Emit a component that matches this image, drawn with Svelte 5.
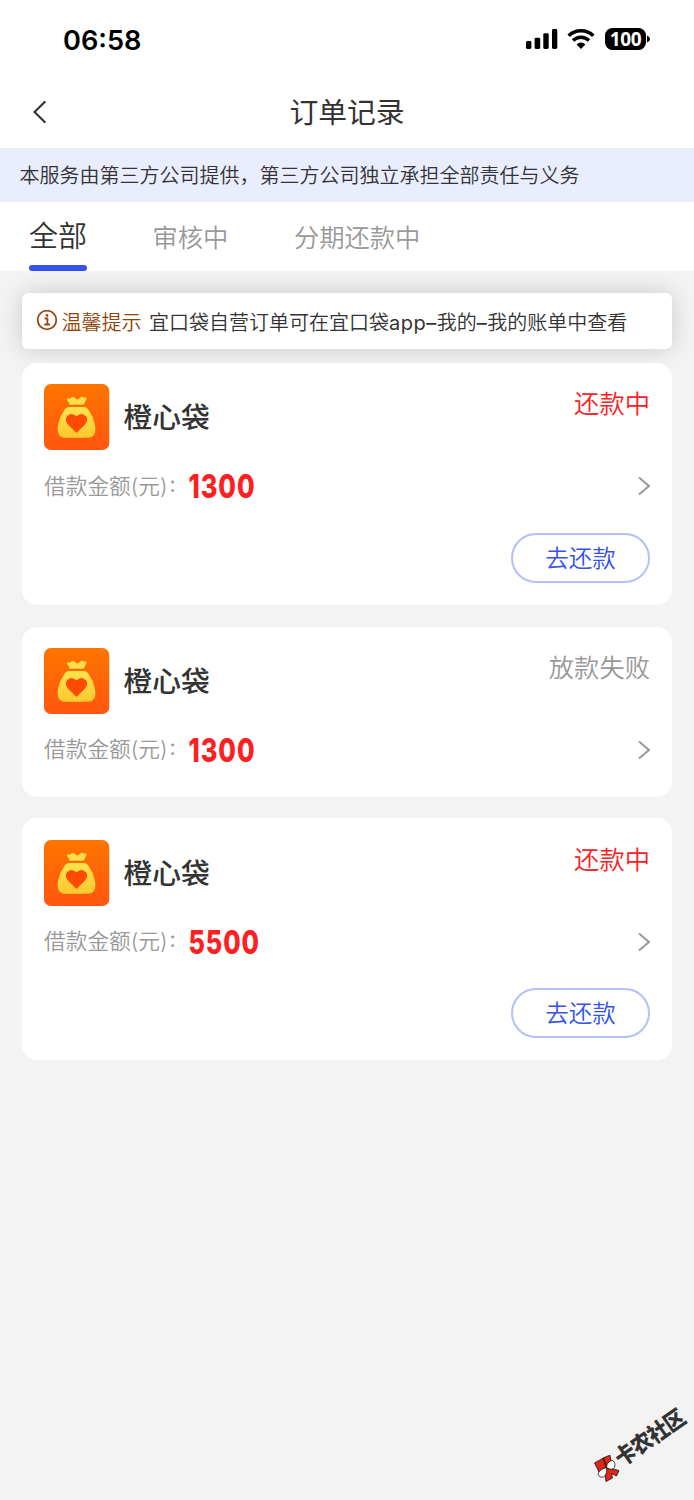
<script>
  const tabs = ['全部', '审核中', '分期还款中'];
  let active = $state(0);
  const orders = [
    { name: '橙心袋', amount: '1300', width: 67, status: '还款中', payable: true },
    { name: '橙心袋', amount: '1300', width: 67, status: '放款失败', payable: false },
    { name: '橙心袋', amount: '5500', width: 71.5, status: '还款中', payable: true }
  ];
</script>

<svelte:head><title>订单记录</title></svelte:head>

<div class="screen">
  <div class="statusbar">
    <span class="time">06:58</span>
    <div class="indicators">
      <svg width="32" height="22" viewBox="0 0 32 22">
        <rect x="0" y="13" width="5.4" height="8" rx="1.4" />
        <rect x="8.6" y="9.7" width="5.6" height="11.3" rx="1.4" />
        <rect x="17.3" y="5.2" width="5.4" height="15.8" rx="1.4" />
        <rect x="26" y="1" width="5.3" height="20" rx="1.4" />
      </svg>
      <svg class="wifi" width="28" height="22" viewBox="0 0 28 22">
        <path d="M1.7 7.7C8.3 1 19.7 1 26.3 7.7" fill="none" stroke="#000" stroke-width="3.5" />
        <path d="M6 12.5C10.4 8.1 17.6 8.1 22 12.5" fill="none" stroke="#000" stroke-width="3.4" />
        <path d="M9.6 16.5C12 13.8 16 13.8 18.4 16.5L14 21.1Z" />
      </svg>
      <div class="battery">100</div>
      <svg class="cap" width="3" height="8" viewBox="0 0 3 8"><path d="M0 0.5Q3 1.8 3 4T0 7.5Z" /></svg>
    </div>
  </div>
  <header>
    <svg class="back" width="16" height="24" viewBox="0 0 16 24"><path d="M13.7 2L3.5 12L13.7 22" fill="none" stroke="#333" stroke-width="2.2" stroke-linecap="round" stroke-linejoin="round" /></svg>
    <h1>订单记录</h1>
  </header>
  <div class="notice">本服务由第三方公司提供，第三方公司独立承担全部责任与义务</div>
  <nav>
    {#each tabs as tab, i}
      <button class="tab" class:active={active === i} onclick={() => (active = i)}>{tab}</button>
    {/each}
  </nav>
  <main>
    <div class="tip">
      <svg width="22" height="22" viewBox="0 0 22 22" fill="none" stroke="#9a4914">
        <circle cx="11" cy="10" r="9.3" stroke-width="1.8" />
        <path d="M8.6 8.5H11.4V14.5M8.3 14.5H14" stroke-width="1.8" />
        <circle cx="11" cy="5.4" r="1.3" fill="#9a4914" stroke="none" />
      </svg>
      <strong>温馨提示</strong>
      <span>宜口袋自营订单可在宜口袋<i>app–</i>我的<i>–</i>我的账单中查看</span>
    </div>
    {#each orders as order}
      <section class="card">
        <div class="top">
          <svg class="logo" width="66" height="66" viewBox="0 0 66 66">
            <defs>
              <linearGradient id="orange" x1="0" y1="0" x2="0" y2="1"><stop offset="0" stop-color="#ff7500" /><stop offset="1" stop-color="#ff560e" /></linearGradient>
              <linearGradient id="gold" x1="0" y1="0" x2="0" y2="1"><stop offset="0" stop-color="#ffe34c" /><stop offset="1" stop-color="#ffc72e" /></linearGradient>
            </defs>
            <rect width="65.3" height="66" rx="7" fill="url(#orange)" />
            <path d="M22.5 14.6Q26.5 15 28 13Q30 12.3 32 15Q34.5 16.5 36.3 13.3Q38.5 12 40 13.6Q43 12.4 42.4 15.5L39.6 20.8H25.7Z" fill="#ffdf48" />
            <path d="M25.8 23H39.2Q43 23 44.6 26Q49 32 50.8 40Q53.6 53.8 43.5 53.8H21.5Q11.5 53.8 14.2 40Q16 32 20.4 26Q22 23 25.8 23Z" fill="url(#gold)" />
            <path d="M32.5 49L24 40.4Q20.2 36 23 32.2Q28 27.6 32.5 32.6Q37 27.6 42 32.2Q44.8 36 41 40.4Z" fill="#ff4a00" />
          </svg>
          <h2>{order.name}</h2>
          <span class="status" class:due={order.payable}>{order.status}</span>
        </div>
        <div class="amount">
          <span class="label">借款金额(元)<b>:</b></span>
          <svg width="120" height="44" viewBox="0 0 120 44"><text x="-0.5" y="34" textLength={order.width} lengthAdjust="spacingAndGlyphs">{order.amount}</text></svg>
          <svg class="arrow" width="14" height="20" viewBox="0 0 14 20"><path d="M2 1.5L12 10L2 18.5" fill="none" stroke="#999" stroke-width="2" /></svg>
        </div>
        {#if order.payable}
          <div class="actions"><button class="pay">去还款</button></div>
        {/if}
      </section>
    {/each}
  </main>
  <div class="watermark">
    <svg width="26" height="28" viewBox="0 0 26 28" stroke="#111" stroke-width=".8">
      <path d="M.5 8L9.5 3L12.5 12L5 17ZM9 3L16 .2L17 6L12 11.5ZM12.5 12.5L25 15.5L22.5 21L17.5 18.5L18.5 23L12 26.5L11 19Z" fill="#e1251b" />
      <path d="M12.5 12.5Q13 6 18.5 5.5Q22 7.5 20.5 12.5Q17.5 16 12.5 12.5ZM12.5 12.5Q5 14.5 4 19Q5.5 23 9.5 22Q13.5 19.5 12.5 12.5Z" fill="#fff" />
    </svg>
    <span>卡农社区</span>
  </div>
</div>

<style>
  :global(body) { margin: 0; }
  .screen { position: relative; box-sizing: border-box; width: 694px; height: 1500px; overflow: hidden; background: #f3f3f3; color: #333; font-family: Inter, "Noto Sans CJK SC", sans-serif; display: flex; flex-direction: column; }
  .statusbar { height: 80px; flex: none; background: #fff; display: flex; justify-content: space-between; align-items: center; padding: 0 44px 2px 63px; box-sizing: border-box; }
  .time { font: 600 27.2px/40px Inter, sans-serif; color: #000; padding-top: 3px; }
  .indicators { display: flex; align-items: center; }
  .wifi { margin-left: 9px; }
  .battery { box-sizing: border-box; width: 41px; height: 22px; margin-left: 10px; border-radius: 7.5px; background: #000; color: #fff; font: 700 19px/22px "Noto Sans", sans-serif; text-align: center; letter-spacing: -.3px; }
  .cap { margin-left: 1px; }
  header { height: 68px; flex: none; background: #fff; display: grid; grid-template-columns: 60px 1fr 60px; align-items: center; padding-bottom: 4px; box-sizing: border-box; }
  .back { margin-left: 31px; }
  h1 { margin: 0; padding-top: 2px; text-align: center; font-size: 28.8px; line-height: 40px; font-weight: 400; }
  .notice { height: 54px; flex: none; background: #e9edfd; padding-left: 19.5px; font-size: 20px; line-height: 56px; font-weight: 350; white-space: nowrap; }
  nav { height: 69px; flex: none; background: #fff; display: flex; align-items: stretch; gap: 65.5px; padding-left: 29px; box-sizing: border-box; }
  button { font-family: inherit; }
  .tab { border: 0; background: none; padding: 0 0 2px; color: #999; font-size: 25.3px; font-weight: 350; border-radius: 0; display: flex; flex-direction: column; align-items: center; justify-content: center; }
  .tab.active { color: #333; font-size: 29px; justify-content: flex-end; gap: 7px; padding: 0; line-height: 42px; }
  .tab.active::after { content: ""; width: 58px; height: 6px; border-radius: 3px; background: #3552ec; }
  main { padding: 22px 22px 0; }
  .tip { height: 56px; border-radius: 6px; background: #fff; box-shadow: 0 0 24px #0000002b; display: flex; align-items: center; padding-left: 14px; font-size: 20px; font-weight: 350; white-space: nowrap; margin-bottom: 14px; }
  .tip strong { color: #8f4308; font-weight: 350; margin: 0 7.5px 0 3.5px; }
  .tip i { font-style: normal; font-weight: 400; letter-spacing: .5px; }
  .card { position: relative; box-sizing: border-box; height: 242px; border-radius: 15px; background: #fff; padding: 21.3px 22px; margin-bottom: 21.7px; }
  .card:not(:has(.actions)) { height: 170px; }
  .top { display: flex; height: 66px; }
  .logo { flex: none; }
  h2 { margin: 0 0 0 13.5px; font-size: 28.8px; line-height: 67px; font-weight: 500; }
  .status { margin-left: auto; font-size: 25.3px; line-height: 39px; color: #999; font-weight: 350; }
  .status.due { color: #fd2023; }
  .amount { display: flex; align-items: center; height: 34px; margin-top: 19px; }
  .label { color: #999; font-size: 21.7px; line-height: 35px; font-weight: 350; width: 145px; white-space: nowrap; }
  .label b { position: relative; top: -2px; font-weight: 400; margin-left: 2px; }
  text { font: 800 33px Inter, sans-serif; letter-spacing: 1.2px; fill: #fd2023; }
  .arrow { margin-left: auto; margin-right: -1px; }
  .actions { display: flex; justify-content: flex-end; margin-top: 29.5px; }
  .pay { box-sizing: border-box; width: 139px; height: 50px; border: 2px solid #b4c0f8; border-radius: 25px; background: #fff; color: #3552ec; font-size: 23.5px; font-weight: 350; line-height: 46px; padding: 1px 0 0; }
  .watermark { position: absolute; left: 594px; top: 1455px; }
  .watermark svg { display: block; }
  .watermark span { position: absolute; left: 14px; top: -33px; width: 84px; line-height: 32px; text-align: center; transform: rotate(-35deg) scaleY(1.1); font-size: 20.5px; letter-spacing: -.6px; font-weight: 900; white-space: nowrap; }
</style>
